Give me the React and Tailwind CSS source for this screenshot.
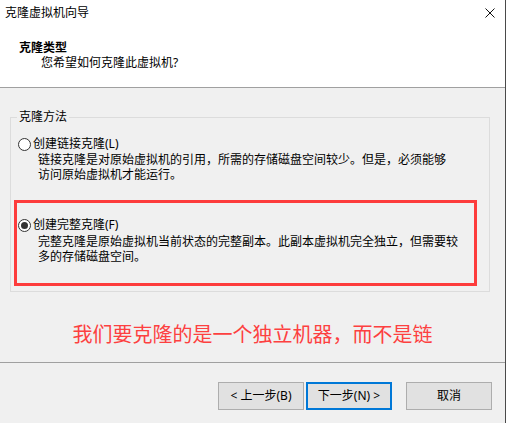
import React from "react";

const font = { fontFamily: '"Noto Sans", "Noto Sans CJK SC", sans-serif' };

function Radio({ checked }) {
  return (
    <span className="flex h-[13px] w-[13px] shrink-0 items-center justify-center rounded-full border border-[#333333] bg-white">
      {checked && <span className="h-[7px] w-[7px] rounded-full bg-[#333333]" />}
    </span>
  );
}

function Option({ checked, label, lines, descClass }) {
  return (
    <div>
      <div className="flex h-[14px] items-center gap-[2px] text-[12px] leading-[14px] text-black">
        <Radio checked={checked} />
        <span>{label}</span>
      </div>
      <div className={descClass}>
        {lines.map((l) => (
          <div key={l} className="whitespace-nowrap">
            {l}
          </div>
        ))}
      </div>
    </div>
  );
}

function Button({ children, primary }) {
  return (
    <button
      className={
        primary
          ? "h-[28px] w-[86px] border-2 border-[#0078d7] bg-[#e1e1e1] text-[12px] text-black"
          : "h-[28px] w-[86px] border border-[#adadad] bg-[#e1e1e1] text-[12px] text-black"
      }
    >
      {children}
    </button>
  );
}

export default function App() {
  return (
    <div
      className="flex h-[423px] w-[506px] flex-col overflow-hidden border-r border-[#4a4a4a] bg-[#f0f0f0]"
      style={font}
    >
      {/* header */}
      <div className="flex h-[88px] flex-col border-b border-[#a0a0a0] bg-white">
        <div className="flex h-[26px] items-center justify-between pl-[5px] pr-[10px]">
          <span className="text-[12px] leading-[16px] text-black">克隆虚拟机向导</span>
          <svg width="10" height="10" viewBox="0 0 10 10">
            <path d="M0.5 0.5 L9.5 9.5 M9.5 0.5 L0.5 9.5" stroke="#111" strokeWidth="1" />
          </svg>
        </div>
        <div className="ml-[19px] mt-[14px] text-[12px] font-bold leading-[16px] text-black">
          克隆类型
        </div>
        <div className="ml-[41px] text-[12px] leading-[14px] text-black">
          您希望如何克隆此虚拟机?
        </div>
      </div>

      {/* body */}
      <div className="flex flex-1 flex-col">
        <fieldset className="ml-[10px] mt-[22px] w-[480px] border border-[#dcdcdc] px-0 pb-[5px]">
          <legend className="ml-[6px] px-[2px] text-[12px] leading-[14px] text-black">
            克隆方法
          </legend>
          <div className="pl-[7px] pt-[13px]">
            <Option
              label="创建链接克隆(L)"
              descClass="mt-[1px] pl-[20px] text-[12px] leading-[15px] text-black"
              lines={[
                "链接克隆是对原始虚拟机的引用，所需的存储磁盘空间较少。但是，必须能够",
                "访问原始虚拟机才能运行。",
              ]}
            />
          </div>
          <div className="ml-[3px] mt-[18px] h-[86px] w-[463px] border-[3px] border-[#fd3c3c] pl-[1px] pt-[15px]">
            <Option
              checked
              label="创建完整克隆(F)"
              descClass="mt-[2px] pl-[20px] text-[12px] leading-[15px] text-black"
              lines={[
                "完整克隆是原始虚拟机当前状态的完整副本。此副本虚拟机完全独立，但需要较",
                "多的存储磁盘空间。",
              ]}
            />
          </div>
        </fieldset>
        <div className="mt-[30px] text-center text-[20px] leading-[26px] text-[#fd4040]">
          我们要克隆的是一个独立机器，而不是链
        </div>
      </div>

      {/* footer */}
      <div className="flex h-[61px] items-start justify-end border-t border-[#a0a0a0] pr-[13px] pt-[19px]">
        <div className="flex gap-[2px]">
          <Button>&lt; 上一步(B)</Button>
          <Button primary>下一步(N) &gt;</Button>
        </div>
        <div className="ml-[14px]">
          <Button>取消</Button>
        </div>
      </div>
    </div>
  );
}
